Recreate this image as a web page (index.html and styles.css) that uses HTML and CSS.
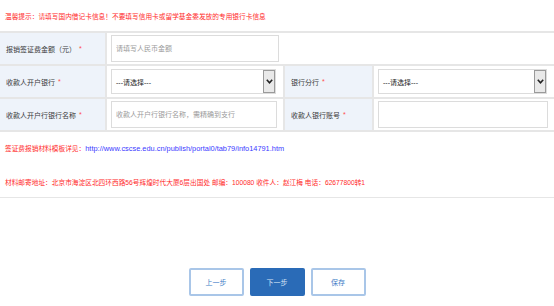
FILE: index.html
```html
<!DOCTYPE html>
<html lang="zh-CN">
<head>
<meta charset="utf-8">
<title>收款信息</title>
<link rel="stylesheet" href="styles.css">
</head>
<body>
<div class="page">
  <div class="notice">温馨提示：请填写国内借记卡信息！不要填写信用卡或留学基金委发放的专用银行卡信息</div>

  <div class="form">
    <div class="label">报销签证费金额（元）<span class="req">*</span></div>
    <div class="field"><input class="text" type="text" placeholder="请填写人民币金额"></div>
    <div class="blank"></div>

    <div class="label">收款人开户银行<span class="req">*</span></div>
    <div class="field divided">
      <div class="select"><span class="select-text">---请选择---</span><span class="arrow"><svg width="7" height="5" viewBox="0 0 7 5"><polyline points="0.8,0.8 3.5,3.8 6.2,0.8" fill="none" stroke="#222" stroke-width="1.6"/></svg></span></div>
    </div>
    <div class="label">银行分行<span class="req">*</span></div>
    <div class="field">
      <div class="select"><span class="select-text">---请选择---</span><span class="arrow"><svg width="7" height="5" viewBox="0 0 7 5"><polyline points="0.8,0.8 3.5,3.8 6.2,0.8" fill="none" stroke="#222" stroke-width="1.6"/></svg></span></div>
    </div>

    <div class="label">收款人开户行银行名称<span class="req">*</span></div>
    <div class="field divided"><input class="text" type="text" placeholder="收款人开户行银行名称，需精确到支行"></div>
    <div class="label">收款人银行账号<span class="req">*</span></div>
    <div class="field"><input class="text" type="text"></div>
  </div>

  <div class="info">
    <p class="line">签证费报销材料模板详见：<a class="link" href="#">http://www.cscse.edu.cn/publish/portal0/tab79/info14791.htm</a></p>
    <p class="line">材料邮寄地址：北京市海淀区北四环西路56号辉煌时代大厦6层出国处 邮编：100080 收件人：赵江梅 电话：62677800转1</p>
  </div>

  <div class="actions">
    <button class="btn" type="button">上一步</button>
    <button class="btn primary" type="button">下一步</button>
    <button class="btn" type="button">保存</button>
  </div>
</div>
</body>
</html>
```

FILE: styles.css
```css
* { box-sizing: border-box; }

html, body {
  margin: 0;
  padding: 0;
  background: #fff;
}

body {
  font-family: "Liberation Sans", "Noto Sans CJK SC", sans-serif;
  font-size: 6.7px;
  color: #333;
}

.page {
  width: 554px;
  height: 306px;
  overflow: hidden;
}

.notice {
  height: 31px;
  padding: 12px 0 0 5px;
  line-height: 10px;
  color: #ff2a2a;
  white-space: nowrap;
}

.form {
  display: grid;
  grid-template-columns: 107px 178px 89px 1fr;
  border-top: 2px solid #e6e6e6;
}

.form > div {
  height: 33px;
  border-bottom: 2px solid #e6e6e6;
}

.label {
  background: #eef3fa;
  border-right: 2px solid #e6e6e6;
  display: flex;
  align-items: center;
  padding: 0 0 0 6px;
  color: #3a3a3a;
  font-size: 7px;
  white-space: nowrap;
}

.req {
  color: #ff4d4d;
  margin-left: 3px;
}

.blank {
  grid-column: span 2;
}

.field {
  display: flex;
  align-items: center;
  padding: 0 6px 0 4px;
}

.field.divided {
  border-right: 2px solid #e6e6e6;
}

.text {
  width: 100%;
  height: 27px;
  border: 1px solid #dcdcdc;
  padding: 0 0 0 4px;
  font: inherit;
  font-size: 7px;
  color: #333;
  outline: none;
  background: #fff;
}

.text::placeholder {
  color: #9a9a9a;
}

.select {
  width: 100%;
  height: 25px;
  margin-right: 1px;
  border: 1px solid #dcdcdc;
  display: flex;
  align-items: stretch;
  background: #fff;
  font-size: 7px;
}

.select-text {
  flex: 1;
  display: flex;
  align-items: center;
  padding-left: 4px;
  color: #222;
}

.arrow {
  width: 12px;
  background: #e9e9e9;
  border: 1px solid #9a9a9a;
  display: flex;
  align-items: center;
  justify-content: center;
}

.info {
  padding: 12px 0 9px 5px;
  border-bottom: 1px solid #e6e6e6;
}

.line {
  margin: 0;
  line-height: 10px;
  color: #ff2a2a;
  white-space: nowrap;
}

.line + .line {
  margin-top: 24px;
}

.link {
  color: #3a3aff;
  font-size: 7.4px;
  text-decoration: none;
}

.actions {
  display: flex;
  justify-content: center;
  gap: 6px;
  margin-top: 70px;
}

.btn {
  width: 55px;
  height: 28px;
  border: 2px solid #a9c6e8;
  border-radius: 2px;
  background: #fff;
  color: #3d7cc6;
  font: inherit;
  font-size: 7px;
  padding: 0;
}

.btn.primary {
  background: #2a6bb7;
  border-color: #2a6bb7;
  color: #d6e4f5;
}
```
